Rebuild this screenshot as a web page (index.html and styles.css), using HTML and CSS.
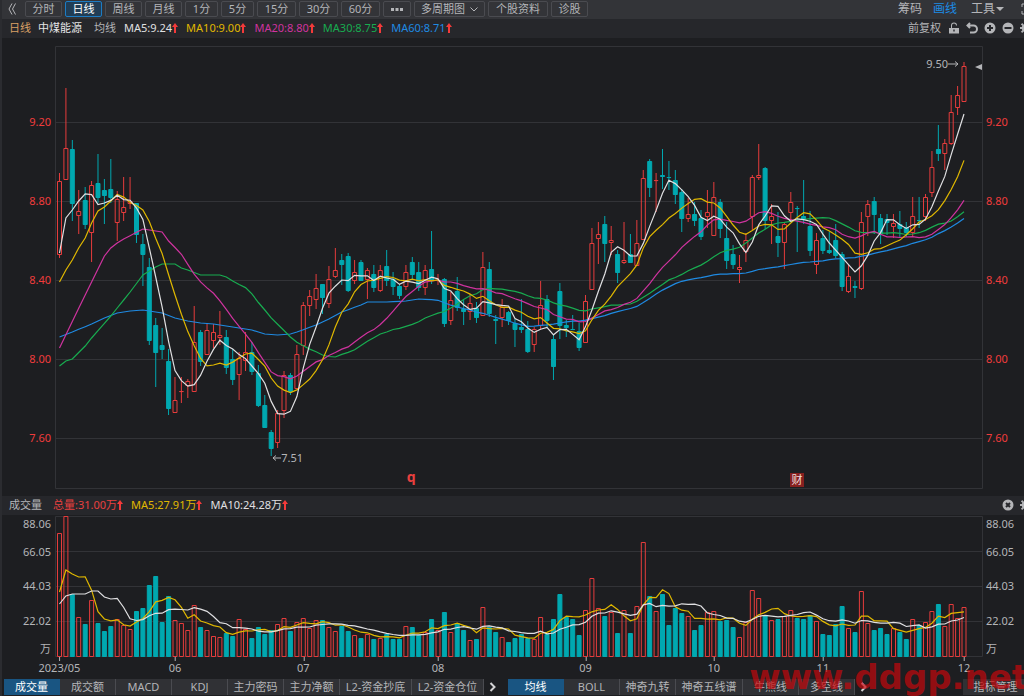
FILE: index.html
```html
<!DOCTYPE html>
<html lang="zh-CN">
<head>
<meta charset="utf-8">
<title>中煤能源 日线</title>
<link rel="stylesheet" href="styles.css">
</head>
<body>
<svg class="symbols" aria-hidden="true">
  <symbol id="up" viewBox="0 0 6 10"><path d="M3 0 6 4H4V10H2V4H0Z"/></symbol>
  <symbol id="gear" viewBox="0 0 12 12"><path fill-rule="evenodd" d="M5 0h2v2l1.400.6L9.800 1.100l1.300 1.300-1.400 1.400.5 1.200h2v2h-2l-.5 1.300 1.400 1.400-1.300 1.300-1.400-1.400L7 10v2H5v-2l-1.400-.4L2.200 11 .9 9.700l1.400-1.400L1.800 7H0V5h1.800l.5-1.200L.9 2.400l1.300-1.300 1.400 1.500L5 2ZM6 4.200a1.800 1.800 0 1 0 0 3.600 1.800 1.800 0 0 0 0-3.600Z"/></symbol>
  <symbol id="next" viewBox="0 0 8 10"><path class="thick" d="M1.500 1 5.500 5 1.500 9"/></symbol>
</svg>
<div class="app">
  <nav class="toolbar">
    <button class="back" aria-label="收起"><svg viewBox="0 0 8 12" width="8" height="12"><path class="thin" d="M4 .5 1 6 4 11.500M7.500.5 4.500 6l3 5.500"/></svg></button>
    <div class="periods">
      <button class="period w-day">分时</button>
      <button class="period w-day on">日线</button>
      <button class="period w-day">周线</button>
      <button class="period w-day">月线</button>
      <button class="period w-min">1分</button>
      <button class="period w-min">5分</button>
      <button class="period w-mins">15分</button>
      <button class="period w-mins">30分</button>
      <button class="period w-mins">60分</button>
      <button class="period w-more" aria-label="更多"><svg viewBox="0 0 12 3" width="12" height="3"><path d="M0 0h3v3H0ZM4.500 0h3v3h-3ZM9 0h3v3H9Z"/></svg></button>
      <button class="period w-multi">多周期图 <svg viewBox="0 0 8 5" width="8" height="5"><path class="thin" d="M.5.500 4 4 7.500.5"/></svg></button>
      <button class="period w-info">个股资料</button>
      <button class="period w-day">诊股</button>
    </div>
    <div class="tools">
      <button class="tool">筹码</button>
      <button class="tool active">画线</button>
      <button class="tool">工具<svg viewBox="0 0 8 4" width="8" height="4"><path d="M0 0h8L4 4Z"/></svg></button>
    </div>
    <svg class="edge" viewBox="0 0 4 14" width="4" height="14"><path class="thin" d="M4 2H2v3M4 12H2V9"/></svg>
  </nav>

  <div class="legend">
    <span class="gold">日线</span>
    <span class="name">中煤能源</span>
    <span class="avg">均线</span>
    <div class="values">
      <span class="white">MA5:9.24<svg class="up"><use href="#up"/></svg></span>
      <span class="yellow">MA10:9.00<svg class="up"><use href="#up"/></svg></span>
      <span class="pink">MA20:8.80<svg class="up"><use href="#up"/></svg></span>
      <span class="green">MA30:8.75<svg class="up"><use href="#up"/></svg></span>
      <span class="blue">MA60:8.71<svg class="up"><use href="#up"/></svg></span>
    </div>
    <div class="icons">
      <button class="tool small">前复权</button>
      <button aria-label="锁定"><svg viewBox="0 0 12 12" width="12" height="12"><path fill-rule="evenodd" d="M3 6V3.500a3 3 0 0 1 6 0H8a2 2 0 0 0-4 0V6h7v5.500H1V6ZM5.300 7.500v2h1.400v-2Z"/></svg></button>
      <button aria-label="撤销"><svg viewBox="0 0 12 12" width="12" height="12"><path class="thick" d="M4 1 1.500 3.500 4 6M2 3.500h5.500a3.500 3.500 0 0 1 0 7H4"/></svg></button>
      <button aria-label="放大"><svg viewBox="0 0 12 12" width="12" height="12"><circle cx="6" cy="6" r="5.500"/><path class="cut" d="M3 6h6M6 3v6"/></svg></button>
      <button aria-label="缩小"><svg viewBox="0 0 12 12" width="12" height="12"><circle cx="6" cy="6" r="5.500"/><path class="cut" d="M2.500 6h7"/></svg></button>
      <button aria-label="设置"><svg width="12" height="12"><use href="#gear"/></svg></button>
    </div>
  </div>

  <main class="price">
    <div class="axis left"><span>9.20</span><span>8.80</span><span>8.40</span><span>8.00</span><span>7.60</span></div>
    <div class="plot">
      <svg id="candles" viewBox="55 46 928 443" preserveAspectRatio="none"></svg>
      <span class="mark high">9.50<svg viewBox="0 0 11 6" width="11" height="6"><path class="thin" d="M0 3h10M7 .5 10 3 7 5.500"/></svg></span>
      <span class="mark low"><svg viewBox="0 0 9 6" width="9" height="6"><path class="thin" d="M9 3H1M4 .5 1 3l3 2.500"/></svg>7.51</span>
      <svg class="pointer" viewBox="0 0 7 6" width="7" height="6"><path d="M7 0v6L0 3Z"/></svg>
      <span class="event q">q</span>
      <span class="event cai">财</span>
    </div>
    <div class="axis right"><span>9.20</span><span>8.80</span><span>8.40</span><span>8.00</span><span>7.60</span></div>
  </main>

  <div class="legend vol-legend">
    <span class="title">成交量</span>
    <div class="values">
      <span class="red">总量:31.00万<svg class="up"><use href="#up"/></svg></span>
      <span class="yellow">MA5:27.91万<svg class="up"><use href="#up"/></svg></span>
      <span class="white">MA10:24.28万<svg class="up"><use href="#up"/></svg></span>
    </div>
    <div class="icons">
      <button aria-label="关闭"><svg viewBox="0 0 12 12" width="12" height="12"><circle cx="6" cy="6" r="5.500"/><path class="cut" d="m4 4 4 4M8 4 4 8"/></svg></button>
      <button aria-label="设置"><svg width="12" height="12"><use href="#gear"/></svg></button>
    </div>
  </div>

  <section class="volume">
    <div class="axis left"><span>88.06</span><span>66.05</span><span>44.03</span><span>22.02</span><span>万</span></div>
    <div class="plot"><svg id="volumes" viewBox="55 516 928 141" preserveAspectRatio="none"></svg></div>
    <div class="axis right"><span>88.06</span><span>66.05</span><span>44.03</span><span>22.02</span><span>万</span></div>
  </section>
  <div class="months" id="months"></div>

  <footer class="tabs">
    <div class="group">
      <button class="tab on">成交量</button><button class="tab">成交额</button><button class="tab">MACD</button><button class="tab">KDJ</button><button class="tab">主力密码</button><button class="tab">主力净额</button><button class="tab wide">L2-资金抄底</button><button class="tab wide">L2-资金仓位</button>
    </div>
    <button class="more" aria-label="更多指标"><svg width="8" height="10"><use href="#next"/></svg></button>
    <div class="group second">
      <button class="tab on">均线</button><button class="tab">BOLL</button><button class="tab">神奇九转</button><button class="tab mid">神奇五线谱</button><button class="tab">牛熊线</button><button class="tab">多空线</button>
    </div>
    <button class="more" aria-label="更多均线"><svg width="8" height="10"><use href="#next"/></svg></button>
    <button class="tab manage">指标管理</button>
  </footer>
  <div class="watermark">www.ddgp.net</div>
</div>
<script src="chart.js"></script>
</body>
</html>
```
FILE: styles.css
```css
* { box-sizing: border-box; }
body {
  margin: 0;
  background: #1d1e21;
  color: #b4b5b8;
  font: 11px/16px "Noto Sans", "Noto Sans CJK SC", sans-serif;
}
button {
  margin: 0;
  padding: 0;
  border: 0;
  background: none;
  color: inherit;
  font: inherit;
  white-space: nowrap;
}
svg { fill: currentColor; flex: none; }
.symbols { position: absolute; width: 0; height: 0; }
.thin { fill: none; stroke: currentColor; stroke-width: 1; }
.thick { fill: none; stroke: currentColor; stroke-width: 2; }
.cut { fill: none; stroke: #26272b; stroke-width: 2; }

.app {
  position: relative;
  display: flex;
  flex-direction: column;
  height: 100vh;
  min-height: 480px;
  overflow: hidden;
  border-left: 2px solid #2b2c30;
}

.toolbar {
  display: flex;
  align-items: center;
  height: 19px;
  flex: none;
  padding-bottom: 1px;
  background: #333438;
}
.back { display: flex; width: 23px; padding-left: 6px; }
.periods { display: flex; gap: 3px; }
.period {
  display: flex;
  align-items: center;
  justify-content: center;
  gap: 5px;
  height: 16px;
  border: 1px solid #4a4b50;
  border-radius: 2px;
  line-height: 14px;
}
.period.on { border-color: #1c7cc4; background: #213d55; color: #fff; }
.w-day { width: 37px; }
.w-min { width: 33px; }
.w-mins { width: 39px; }
.w-more { width: 28px; }
.w-multi { width: 71px; }
.w-info { width: 60px; }
.tools { display: flex; gap: 11px; margin-left: auto; font-size: 12px; }
.tool { display: flex; align-items: center; gap: 1px; }
.tool:last-child { margin-left: 3px; }
.tool.active { color: #1c8ce6; }
.edge { margin-left: 16px; }

.legend {
  display: flex;
  align-items: center;
  height: 19px;
  flex: none;
  padding: 0 0 1px 7px;
  background: #26272b;
  white-space: nowrap;
  overflow: hidden;
}
.name { margin-left: 7px; color: #e4e4e6; }
.avg { margin: 0 8px 0 12px; }
.values { display: flex; gap: 8px; }
.values span { display: flex; align-items: center; }
.up { width: 6px; height: 10px; color: #f43a3a; }
.icons { display: flex; align-items: center; gap: 6px; margin: 0 -8px 0 auto; }
.icons button { display: flex; }
.tool.small { margin: 0 1px 0 0; }
.gold { color: #d9a066; }
.white { color: #e0e0e2; }
.yellow { color: #e0b800; }
.pink { color: #cf339f; }
.green { color: #18ac50; }
.blue { color: #1f8ae2; }
.red { color: #e8403f; }
.title { margin-right: 11px; }

.price, .volume { display: grid; grid-template-columns: 53px 1fr 41px; }
.price { flex: 443 1 0; margin: 8px 0 7px; min-height: 0; }
.volume { flex: 141 1 0; margin-top: 1px; min-height: 0; }
.axis { display: grid; align-items: center; min-height: 0; }
.price .axis { grid-template-rows: 36fr repeat(5, 79fr) 12fr; color: #f03c3c; }
.price .axis::before { content: ""; }
.volume .axis { grid-template-rows: 15fr 40fr 31fr 40fr 15fr; }
.left { justify-items: end; padding-right: 4px; }
.right { padding-left: 3px; }
.plot { position: relative; min-height: 0; }
.plot > svg:first-child { position: absolute; inset: 0; width: 100%; height: 100%; }
.plot > svg * { vector-effect: non-scaling-stroke; }

.frame, .grid { fill: none; stroke: #323337; }
.rise { fill: none; stroke: #e63c3c; }
.fall { fill: #00a8b0; stroke: #00a8b0; }
.ma { fill: none; stroke-width: 1.2; stroke: currentColor; }

.mark { position: absolute; display: flex; align-items: center; }
.high { right: 24px; top: 10px; }
.low { left: 23.400%; bottom: 23px; }
.pointer { position: absolute; right: 1px; top: 18px; }
.event { position: absolute; color: #e8403f; }
.q { left: 37.900%; bottom: 4px; font-size: 14px; font-weight: 700; }
.cai { left: 79.200%; bottom: 2px; width: 14px; height: 14px; background: #86201f; color: #f0dcdc; line-height: 14px; text-align: center; }

.months { position: relative; height: 21px; flex: none; margin: 0 41px 0 53px; }
.months span { position: absolute; top: 0; padding-top: 3px; transform: translateX(-50%); }
.months span::before { content: ""; position: absolute; top: 0; left: 50%; height: 4px; border-left: 1px solid #b4b5b8; }

.tabs { display: flex; align-items: center; height: 18px; flex: none; padding-left: 2px; }
.group { display: flex; }
.tab {
  width: 56px;
  height: 16px;
  border-right: 1px solid #4a4b50;
  background: #303135;
  line-height: 16px;
}
.tab.on { background: #195582; color: #fff; border-color: #195582; }
.tab.wide { width: 72px; }
.tab.mid { width: 67px; }
.more { display: flex; justify-content: center; width: 18px; color: #d4d4d6; }
.second { margin-left: 6px; }
.manage { width: 61px; margin-left: auto; border: 0; padding-left: 4px; }
.watermark {
  position: absolute;
  right: -4px;
  bottom: -1px;
  color: rgba(200, 8, 12, .7);
  font: 700 34px/40px "DejaVu Sans", sans-serif;
  pointer-events: none;
}
```
FILE: chart.js
```js
// One entry per day: direction, high, body top, body bottom, low (chart units).
const days = `
u 173 181 255 258;u 88 148 180 180;d 140 149 204 221;u 190 211 216 234;d 187 200 225 229;u 181 185 233 262;d 154 183 198 203;d 179 190 196 224;d 159 189 198 203;u 191 199 223 241
u 177 207 213 221;u 177 201 204 209;d 203 203 235 243;d 234 244 255 286;d 258 267 341 345;d 318 325 353 387;d 328 345 350 359;d 349 361 409 415;u 377 400 413 413;u 377 391 391 403
u 379 381 386 398;u 306 342 392 392;d 330 332 362 366;u 324 330 355 355;u 324 332 341 348;u 311 335 338 345;d 330 337 368 374;d 349 359 380 385;u 352 358 375 400;u 332 352 361 371
d 342 352 372 375;d 365 373 406 407;d 395 405 428 428;d 430 432 449 456;u 410 413 443 448;u 371 375 411 418;d 373 375 392 395;u 345 354 389 389;u 302 305 346 355;u 290 296 306 316
u 274 288 300 309;d 284 284 298 314;u 266 279 304 308;u 248 270 277 278;d 254 260 265 285;d 253 256 291 292;u 260 272 281 284;d 260 262 281 281;u 268 270 280 299;d 265 274 288 292
u 265 270 291 292;d 250 266 281 286;d 272 279 287 295;d 285 286 296 299;u 265 272 287 290;d 257 262 275 280;d 262 272 288 291;u 265 270 288 295;d 231 269 281 284;u 274 280 281 285
d 278 279 324 327;u 292 300 321 325;d 277 291 308 311;d 300 309 312 325;u 294 303 312 320;d 302 308 318 323;u 252 267 316 316;d 262 269 314 317;d 315 319 321 344;u 299 307 318 327
d 311 312 321 325;d 319 323 330 347;d 299 327 330 333;d 321 329 352 353;u 327 329 345 352;u 281 305 326 329;d 295 299 321 327;d 335 339 367 380;d 283 291 326 339;d 320 325 328 337
d 315 329 330 330;d 323 331 348 351;u 295 301 343 343;u 228 243 290 290;u 222 234 239 264;d 216 224 244 262;u 226 240 243 255;d 250 254 273 283;u 222 260 263 264;d 234 254 263 263
u 220 243 266 266;u 170 178 240 240;d 159 161 188 197;u 173 180 180 212;d 149 175 177 189;d 161 177 178 190;d 170 180 195 204;d 189 192 219 232;u 198 214 219 222;d 202 214 221 226
d 210 218 237 240;u 190 212 217 228;u 182 197 236 236;d 199 202 229 238;d 222 238 261 269;d 245 254 265 269;u 255 267 270 283;u 233 240 252 262;u 175 177 217 230;u 144 175 178 180
d 167 168 221 229;u 204 216 221 244;d 212 236 243 257;u 222 224 243 269;u 192 202 213 221;d 206 208 209 252;d 180 216 220 224;d 211 226 251 256;u 233 240 265 274;d 230 238 251 254
d 232 250 253 254;d 224 240 256 258;d 252 254 287 291;u 265 276 292 293;d 281 286 288 298;u 212 222 289 290;u 200 204 217 236;d 197 201 215 234;d 214 218 234 244;d 214 219 223 235
u 214 223 227 238;d 211 224 229 237;d 222 227 233 237;u 197 216 233 237;d 197 220 221 228;u 194 197 217 221;u 151 167 193 197;d 125 149 154 161;u 139 143 154 170;u 95 112 144 145
u 86 95 108 115;u 62 66 102 102`.trim().split(/[;\n]/).map(row => {
  const [dir, ...n] = row.split(' ');
  return [dir, ...n.map(Number)];
});

const volumes = `
533 516 594 617 624 600 623 631 626 619 625 629 611 608 585 576 622 596 620 623
630 605 627 630 636 637 633 636 619 629 638 627 634 630 624 618 631 622 618 628
620 620 627 631 626 631 635 638 634 639 638 634 639 639 626 627 635 632 619 630
612 632 623 630 640 639 607 627 632 637 642 638 634 638 639 617 634 619 594 617
619 635 610 578 608 616 612 633 610 633 606 542 596 611 594 625 608 613 616 630
625 612 611 621 620 627 637 622 590 598 615 620 619 616 610 618 619 615 621 634
635 624 606 628 632 591 623 630 628 634 628 632 639 619 625 622 611 604 626 604
618 607`.trim().split(/\s+/).map(Number);

const x = i => 59.5 + i * 6.415;
const closes = days.map(d => d[0] === 'u' ? d[2] : d[3]);

// Averages before the first full window come from known [index, value] points.
function average(values, n, known) {
  return values.map((_, i) => {
    if (i >= n - 1) return values.slice(i - n + 1, i + 1).reduce((a, b) => a + b) / n;
    let k = 0;
    while (k < known.length - 2 && known[k + 1][0] < i) k++;
    const [a, p] = known[k], [b, q] = known[k + 1];
    return p + (q - p) * (i - a) / (b - a);
  });
}
const line = (values, color) =>
  `<polyline class="ma ${color}" points="${values.map((v, i) => x(i).toFixed(1) + ',' + v.toFixed(1)).join(' ')}"/>`;
const grid = ys => ys.map(y => `<path class="grid" d="M55 ${y}H982"/>`).join('');

const candles = days.map(([dir, high, top, bottom, low], i) => {
  const c = x(i), l = (c - 2).toFixed(1), h = Math.max(bottom - top - 1, 0);
  if (dir === 'u') {
    return `<path class="rise" d="M${c} ${high}V${top}M${c} ${bottom}V${low}"/><rect class="rise" x="${l}" y="${top + .5}" width="4" height="${h || .1}"/>`;
  }
  return `<path class="fall" d="M${c} ${high}V${low}"/><rect class="fall" x="${l}" y="${top + .5}" width="4" height="${h || .1}"/>`;
}).join('');

document.getElementById('candles').innerHTML =
  '<rect class="frame" x="55.500" y="46.500" width="927" height="442"/>' +
  grid([122.5, 201.5, 280.5, 359.5, 438.5]) + candles +
  line(average(closes, 60, [[0,337],[2,332],[5,324],[7,318],[9,313],[11,311],[13,310],[16,313],[18,318],[20,321],[22,323],[24,324],[26,326],[28,328],[30,330],[32,334],[34,335],[36,334],[37,332],[40,325],[42,319],[44,312],[47,305],[48,302],[51,302],[54,301],[56,299],[59,300]]), 'blue') +
  line(average(closes, 30, [[0,366],[1,361],[2,359],[4,346],[5,338],[8,316],[11,292],[13,275],[15,267],[16,264],[18,264],[19,268],[20,270],[22,275],[25,275],[26,277],[27,281],[29,288]]), 'green') +
  line(average(closes, 20, [[0,348],[4,295],[5,282],[7,256],[8,248],[9,243],[10,239],[13,229],[16,232],[17,241],[19,254]]), 'pink') +
  line(average(closes, 10, [[0,282],[1,270],[2,260],[3,248],[4,238],[5,223],[6,211],[7,207],[8,201]]), 'yellow') +
  line(average(closes, 5, [[0,253],[1,218],[2,210],[3,201]]), 'white');

document.getElementById('volumes').innerHTML =
  '<rect class="frame" x="55.500" y="516.500" width="927" height="140"/>' +
  grid([551.5, 586.5, 621.5]) +
  volumes.map((v, i) => `<rect class="${days[i][0] === 'u' ? 'rise' : 'fall'}" x="${(x(i) - 2).toFixed(1)}" y="${v + .5}" width="4" height="${656 - v}"/>`).join('') +
  line(average(volumes, 5, [[0,592],[1,570],[2,574],[3,577]]), 'yellow') +
  line(average(volumes, 10, [[0,604],[1,596],[2,594],[4,594],[5,591],[6,591],[7,597],[8,599]]), 'white');

const months = [[0, '2023/05'], [18, '06'], [38, '07'], [59, '08'], [82, '09'], [102, '10'], [119, '11'], [141, '12']];
document.getElementById('months').innerHTML = months
  .map(([i, text]) => `<span style="left:${((x(i) - 55) / 9.28).toFixed(2)}%">${text}</span>`).join('');
```
